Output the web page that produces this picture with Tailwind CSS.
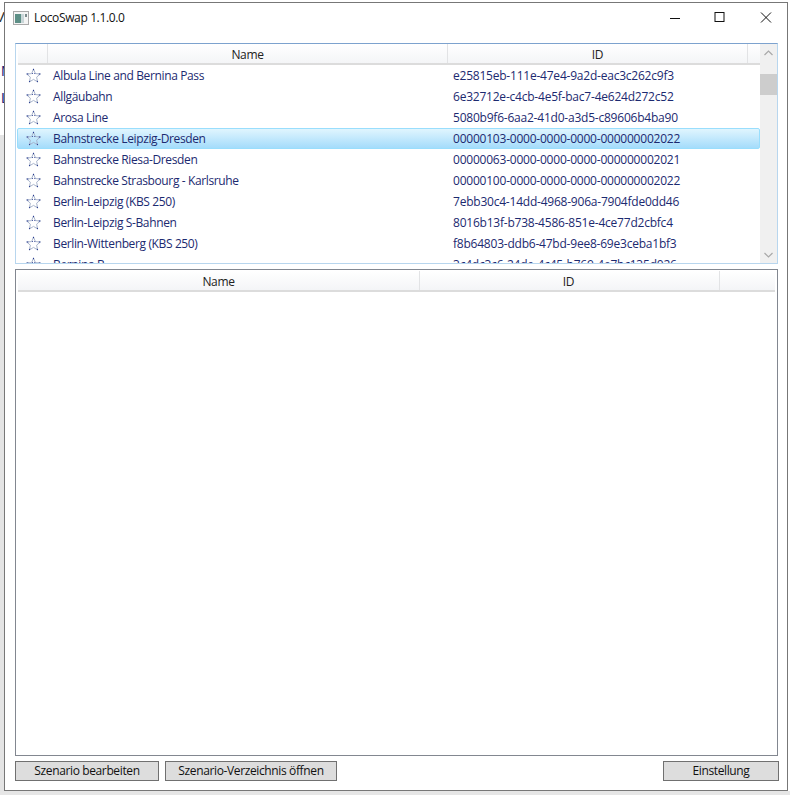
<!doctype html>
<html><head><meta charset="utf-8"><script src="https://cdn.jsdelivr.net/npm/@tailwindcss/browser@4"></script></head>
<body class="relative w-[790px] h-[795px] overflow-hidden bg-white font-['Open_Sans','Noto_Sans',sans-serif] text-[12px] leading-[16px] text-[#1a1a1a] tracking-[-0.37px]">
<svg width="0" height="0" class="absolute"><defs><g id="star"><path d="M7.5 1 9.4 5.6 14.3 6 10.6 9.2 11.7 14 7.5 11.4 3.3 14 4.4 9.2.7 6 5.6 5.6Z" fill="none" stroke="#a9b5cc" stroke-width="1"/><path d="M7.5 .8v1.4M.7 6h1.6M12.8 6h1.6M3 14l1.2-1M12 14l-1.2-1M6 5.5h.8M8.4 5.5h.8" stroke="#26398f" stroke-width="1" fill="none"/></g></defs></svg>

<div class="absolute left-0 top-[135px] bottom-0 w-[4px] bg-[#e4e4e4]"></div>
<div class="absolute left-0 right-0 top-[791px] bottom-0 bg-[#e6e6e6]"></div>
<div class="absolute left-[-5px] top-[8px] font-['Liberation_Sans'] text-[15px] leading-[18px] tracking-normal text-[#333]">V</div>
<div class="absolute left-[1px] top-[62px] font-['Liberation_Sans'] text-[15px] leading-[18px] tracking-normal text-[#1f2a80]">M</div>
<div class="absolute left-[1px] top-[89px] font-['Liberation_Sans'] text-[15px] leading-[18px] tracking-normal text-[#1f2a80]">L</div>

<div class="absolute left-[4px] top-[2px] w-[784px] h-[789px] bg-white border border-[#777] flex flex-col">
  <div class="h-[30px] flex items-center shrink-0 relative">
    <svg class="ml-[8px]" width="16" height="14" viewBox="0 0 16 14"><rect x=".5" y=".5" width="15" height="13" fill="#f4f4f4" stroke="#a9a9a9"/><rect x="2" y="3" width="6" height="9" fill="#5d8f86"/><rect x="8" y="3" width="3" height="9" fill="#c9d6d8"/><rect x="12" y="3" width="2" height="3" fill="#7a8a8c"/></svg>
    <span class="ml-[5px] text-[#111]">LocoSwap 1.1.0.0</span>
    <svg class="absolute left-[664px] top-[9px]" width="12" height="12" viewBox="0 0 12 12"><path d="M1 6.5h10" stroke="#111"/></svg>
    <svg class="absolute left-[709px] top-[9px]" width="12" height="12" viewBox="0 0 12 12"><rect x="1" y=".5" width="9" height="9" fill="none" stroke="#111"/></svg>
    <svg class="absolute left-[755px] top-[9px]" width="12" height="12" viewBox="0 0 12 12"><path d="M1 .5l10 10M11 .5l-10 10" stroke="#111"/></svg>
  </div>

  <div class="ml-[10px] mr-[9px] mt-[10px] h-[221px] shrink-0 border border-[#7da2ce] border-b-[#b8d6ee] border-r-[#b8d6ee] border-l-[#b8d6ee] flex overflow-hidden">
    <div class="w-[744px] pl-[2px] flex flex-col shrink-0 overflow-hidden">
      <div class="h-[21px] shrink-0 flex bg-gradient-to-b from-white to-[#f4f5f7] border-b-2 border-[#dcdcdc] text-[#222]">
        <div class="w-[30px] border-r border-[#e2e3e5]"></div>
        <div class="w-[400px] border-r border-[#e2e3e5] text-center pt-[3px]">Name</div>
        <div class="w-[300px] border-r border-[#e2e3e5] text-center pt-[3px]">ID</div>
      </div>
      <div class="flex h-[21px] shrink-0 items-center text-[#1c2a70]"><div class="w-[29px] pl-[8px] shrink-0"><svg class="block" width="15" height="15"><use href="#star"/></svg></div><div class="w-[400px] pl-[6px] shrink-0">Albula Line and Bernina Pass</div><div class="pl-[6px] tracking-[-0.22px]">e25815eb-111e-47e4-9a2d-eac3c262c9f3</div></div>
      <div class="flex h-[21px] shrink-0 items-center text-[#1c2a70]"><div class="w-[29px] pl-[8px] shrink-0"><svg class="block" width="15" height="15"><use href="#star"/></svg></div><div class="w-[400px] pl-[6px] shrink-0">Allgäubahn</div><div class="pl-[6px] tracking-[-0.22px]">6e32712e-c4cb-4e5f-bac7-4e624d272c52</div></div>
      <div class="flex h-[21px] shrink-0 items-center text-[#1c2a70]"><div class="w-[29px] pl-[8px] shrink-0"><svg class="block" width="15" height="15"><use href="#star"/></svg></div><div class="w-[400px] pl-[6px] shrink-0">Arosa Line</div><div class="pl-[6px] tracking-[-0.22px]">5080b9f6-6aa2-41d0-a3d5-c89606b4ba90</div></div>
      <div class="flex h-[21px] shrink-0 items-center text-[#1c2a70] border border-[#99defd] rounded-[2px] bg-gradient-to-b from-[#e0f5fe] to-[#a4dcfb] -mx-[1px] w-[743px]"><div class="w-[29px] pl-[8px] shrink-0"><svg class="block" width="15" height="15"><use href="#star"/></svg></div><div class="w-[400px] pl-[6px] shrink-0">Bahnstrecke Leipzig-Dresden</div><div class="pl-[6px] tracking-[-0.22px]">00000103-0000-0000-0000-000000002022</div></div>
      <div class="flex h-[21px] shrink-0 items-center text-[#1c2a70]"><div class="w-[29px] pl-[8px] shrink-0"><svg class="block" width="15" height="15"><use href="#star"/></svg></div><div class="w-[400px] pl-[6px] shrink-0">Bahnstrecke Riesa-Dresden</div><div class="pl-[6px] tracking-[-0.22px]">00000063-0000-0000-0000-000000002021</div></div>
      <div class="flex h-[21px] shrink-0 items-center text-[#1c2a70]"><div class="w-[29px] pl-[8px] shrink-0"><svg class="block" width="15" height="15"><use href="#star"/></svg></div><div class="w-[400px] pl-[6px] shrink-0">Bahnstrecke Strasbourg - Karlsruhe</div><div class="pl-[6px] tracking-[-0.22px]">00000100-0000-0000-0000-000000002022</div></div>
      <div class="flex h-[21px] shrink-0 items-center text-[#1c2a70]"><div class="w-[29px] pl-[8px] shrink-0"><svg class="block" width="15" height="15"><use href="#star"/></svg></div><div class="w-[400px] pl-[6px] shrink-0">Berlin-Leipzig (KBS 250)</div><div class="pl-[6px] tracking-[-0.22px]">7ebb30c4-14dd-4968-906a-7904fde0dd46</div></div>
      <div class="flex h-[21px] shrink-0 items-center text-[#1c2a70]"><div class="w-[29px] pl-[8px] shrink-0"><svg class="block" width="15" height="15"><use href="#star"/></svg></div><div class="w-[400px] pl-[6px] shrink-0">Berlin-Leipzig S-Bahnen</div><div class="pl-[6px] tracking-[-0.22px]">8016b13f-b738-4586-851e-4ce77d2cbfc4</div></div>
      <div class="flex h-[21px] shrink-0 items-center text-[#1c2a70]"><div class="w-[29px] pl-[8px] shrink-0"><svg class="block" width="15" height="15"><use href="#star"/></svg></div><div class="w-[400px] pl-[6px] shrink-0">Berlin-Wittenberg (KBS 250)</div><div class="pl-[6px] tracking-[-0.22px]">f8b64803-ddb6-47bd-9ee8-69e3ceba1bf3</div></div>
      <div class="flex h-[21px] shrink-0 items-center text-[#1c2a70]"><div class="w-[29px] pl-[8px] shrink-0"><svg class="block" width="15" height="15"><use href="#star"/></svg></div><div class="w-[400px] pl-[6px] shrink-0">Bernina B</div><div class="pl-[6px] tracking-[-0.22px]">3c4dc3c6-24de-4c45-b769-4e7bc135d026</div></div>
    </div>
    <div class="w-[17px] shrink-0 bg-[#f0f0f0] flex flex-col items-center justify-between">
      <div class="w-full flex flex-col">
        <div class="h-[17px] flex items-center justify-center"><svg width="9" height="6" viewBox="0 0 9 6"><path d="M.5 5 4.5 1l4 4" fill="none" stroke="#a8a8a8" stroke-width="1.2"/></svg></div>
        <div class="mt-[13px] h-[21px] bg-[#cdcdcd]"></div>
      </div>
      <div class="h-[17px] flex items-center justify-center"><svg width="9" height="6" viewBox="0 0 9 6"><path d="M.5 1l4 4 4-4" fill="none" stroke="#a8a8a8" stroke-width="1.2"/></svg></div>
    </div>
  </div>

  <div class="ml-[10px] mr-[9px] mt-[5px] flex-1 border border-[#828790] px-[2px] pt-[1px]">
    <div class="h-[21px] flex bg-gradient-to-b from-white to-[#f4f5f7] border-b-2 border-[#dcdcdc] text-[#222]">
      <div class="w-[402px] border-r border-[#e2e3e5] text-center pt-[3px]">Name</div>
      <div class="w-[300px] border-r border-[#e2e3e5] text-center pt-[3px] pr-[2px]">ID</div>
      <div class="flex-1"></div>
    </div>
  </div>

  <div class="ml-[10px] mr-[8px] mt-[5px] mb-[9px] h-[20px] flex gap-[6px] shrink-0 text-[#111]">
    <div class="w-[144px] bg-[#dddddd] border border-[#707070] flex items-center justify-center">Szenario bearbeiten</div>
    <div class="w-[172px] bg-[#dddddd] border border-[#707070] flex items-center justify-center">Szenario-Verzeichnis öffnen</div>
    <div class="ml-auto w-[116px] bg-[#dddddd] border border-[#707070] flex items-center justify-center">Einstellung</div>
  </div>
</div>
</body></html>
